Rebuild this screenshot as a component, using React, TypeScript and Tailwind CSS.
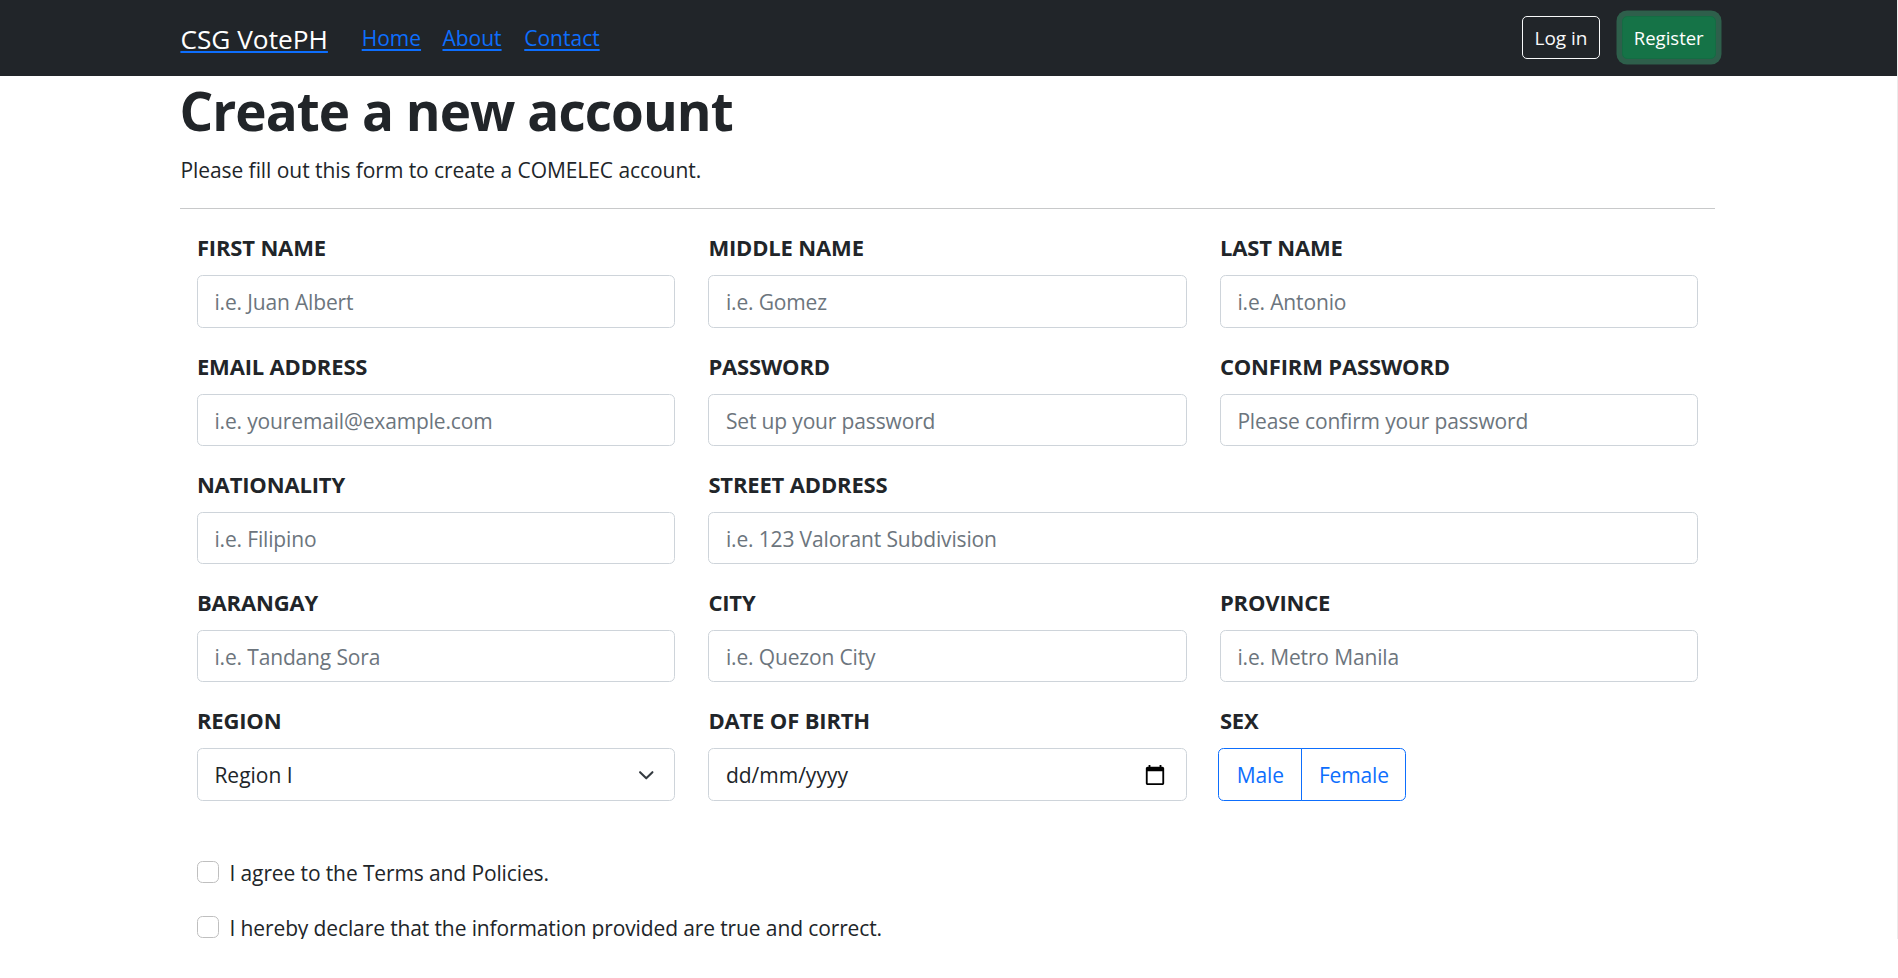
import type { ReactNode } from 'react';

const navLinks = [
  { label: 'Home', place: 'ml-[33.5px] w-[58.6px]' },
  { label: 'About', place: 'ml-[22.2px] w-[59.6px]' },
  { label: 'Contact', place: 'ml-[22.2px] w-[75.5px]' },
];

function Field({ label, wide, children }: { label: string; wide?: boolean; children: ReactNode }) {
  return (
    <div className={wide ? 'col-span-2 min-w-0' : 'min-w-0'}>
      <label className="mb-[11px] block h-[33px] text-[22px] leading-[33px] font-bold tracking-[-0.16px]">{label}</label>
      {children}
    </div>
  );
}

const control =
  'block h-[52.25px] w-full rounded-[5.5px] border border-[#ced4da] bg-white px-[16.5px] pt-[2px] text-[21px] tracking-[-0.15px] outline-none placeholder:text-[#6c757d] placeholder:opacity-100';

function TextField({ label, hint, wide, type = 'text' }: { label: string; hint: string; wide?: boolean; type?: string }) {
  return (
    <Field label={label} wide={wide}>
      <input type={type} placeholder={hint} className={control} />
    </Field>
  );
}

function Check({ label, spacing }: { label: string; spacing: string }) {
  return (
    <label className={`flex h-[33px] items-center text-[21px] tracking-[-0.12px] ${spacing}`}>
      <input
        type="checkbox"
        className="mr-[10.6px] size-[22px] shrink-0 appearance-none rounded-[5.5px] border border-[#bfbfbf] bg-white"
      />
      <span className="pt-[2px] leading-[33px] whitespace-nowrap">{label}</span>
    </label>
  );
}

export default function App() {
  return (
    <div className="h-[978px] overflow-hidden bg-white font-['Open_Sans',sans-serif] text-[#212529]">
      <div className="h-[939px] overflow-hidden border-r border-[#ececec]">
        <header className="flex h-[76px] items-center bg-[#212529] pl-[180.4px]">
          <a href="#" className="w-[147.8px] pt-px text-[26.25px] leading-[40px] whitespace-nowrap text-white underline decoration-[#0d6efd] decoration-2 underline-offset-[2px]">
            CSG VotePH
          </a>
          <nav className="flex">
            {navLinks.map(({ label, place }) => (
              <a
                key={label}
                href="#"
                className={`text-[21px] leading-[33px] whitespace-nowrap text-[#0d6efd] underline decoration-2 underline-offset-[3px] ${place}`}
              >
                {label}
              </a>
            ))}
          </nav>
          <div className="mr-[181.5px] mb-px ml-auto flex gap-[22px]">
            <button className="h-[43px] w-[78px] rounded-[5px] border border-[#f8f9fa] pt-px text-[19px] leading-none whitespace-nowrap text-[#f8f9fa]">
              Log in
            </button>
            <button className="h-[43px] w-[93.5px] rounded-[5px] border border-[#146c43] bg-[#157347] pt-px text-[18.5px] leading-none whitespace-nowrap text-white shadow-[0_0_0_5.5px_rgba(60,153,110,0.5)]">
              Register
            </button>
          </div>
        </header>

        <main className="ml-[180.4px] w-[1534.5px]">
          <h1 className="-ml-px h-[77.5px] pt-[2px] text-[53px] leading-[66px] font-bold tracking-[-0.95px] whitespace-nowrap">
            Create a new account
          </h1>
          <p className="h-[33px] text-[21px] leading-[33px] tracking-[-0.06px]">
            Please fill out this form to create a COMELEC account.
          </p>
          <hr className="mt-[21.5px] mb-[22.25px] border-t border-[#c8c9ca]" />

          <form className="px-[16.5px]">
            <div className="grid grid-cols-3 gap-x-[33px] gap-y-[22px]">
              <TextField label="FIRST NAME" hint="i.e. Juan Albert" />
              <TextField label="MIDDLE NAME" hint="i.e. Gomez" />
              <TextField label="LAST NAME" hint="i.e. Antonio" />

              <TextField label="EMAIL ADDRESS" hint="i.e. youremail@example.com" />
              <TextField label="PASSWORD" hint="Set up your password" type="password" />
              <TextField label="CONFIRM PASSWORD" hint="Please confirm your password" type="password" />

              <TextField label="NATIONALITY" hint="i.e. Filipino" />
              <TextField label="STREET ADDRESS" hint="i.e. 123 Valorant Subdivision" wide />

              <TextField label="BARANGAY" hint="i.e. Tandang Sora" />
              <TextField label="CITY" hint="i.e. Quezon City" />
              <TextField label="PROVINCE" hint="i.e. Metro Manila" />

              <Field label="REGION">
                <div className="flex h-[52.25px] items-center justify-between rounded-[5.5px] border border-[#ced4da] pr-[20px] pl-[16.5px] text-[21px]">
                  <span className="pt-[2px]">Region I</span>
                  <svg viewBox="0 0 16 16" className="mt-px size-[16.5px]" fill="none" stroke="#343a40" strokeWidth="2" strokeLinecap="round" strokeLinejoin="round">
                    <path d="m2 5 6 6 6-6" />
                  </svg>
                </div>
              </Field>
              <Field label="DATE OF BIRTH">
                <div className="flex h-[52.25px] items-center justify-between rounded-[5.5px] border border-[#ced4da] pr-[20px] pl-[16.5px] text-[21px]">
                  <span className="pt-[2px]">dd/mm/yyyy</span>
                  <svg viewBox="0 0 24 24" className="mt-px size-[22px]" fill="#000">
                    <path d="M20 3h-1V1h-2v2H7V1H5v2H4c-1.1 0-2 .9-2 2v16c0 1.1.9 2 2 2h16c1.1 0 2-.9 2-2V5c0-1.1-.9-2-2-2zm0 18H4V8h16v13z" />
                  </svg>
                </div>
              </Field>
              <Field label="SEX">
                <div className="-ml-[1.5px] flex h-[52.25px] text-[21px] tracking-[-0.15px] text-[#0d6efd]">
                  <button type="button" className="w-[84px] rounded-l-[5.5px] border border-[#0d6efd] pt-[2px]">
                    Male
                  </button>
                  <button type="button" className="-ml-px w-[105px] rounded-r-[5.5px] border border-[#0d6efd] pt-[2px]">
                    Female
                  </button>
                </div>
              </Field>
            </div>

            <Check label="I agree to the Terms and Policies." spacing="mt-[55px]" />
            <Check label="I hereby declare that the information provided are true and correct." spacing="mt-[22px]" />
          </form>
        </main>
      </div>
    </div>
  );
}
